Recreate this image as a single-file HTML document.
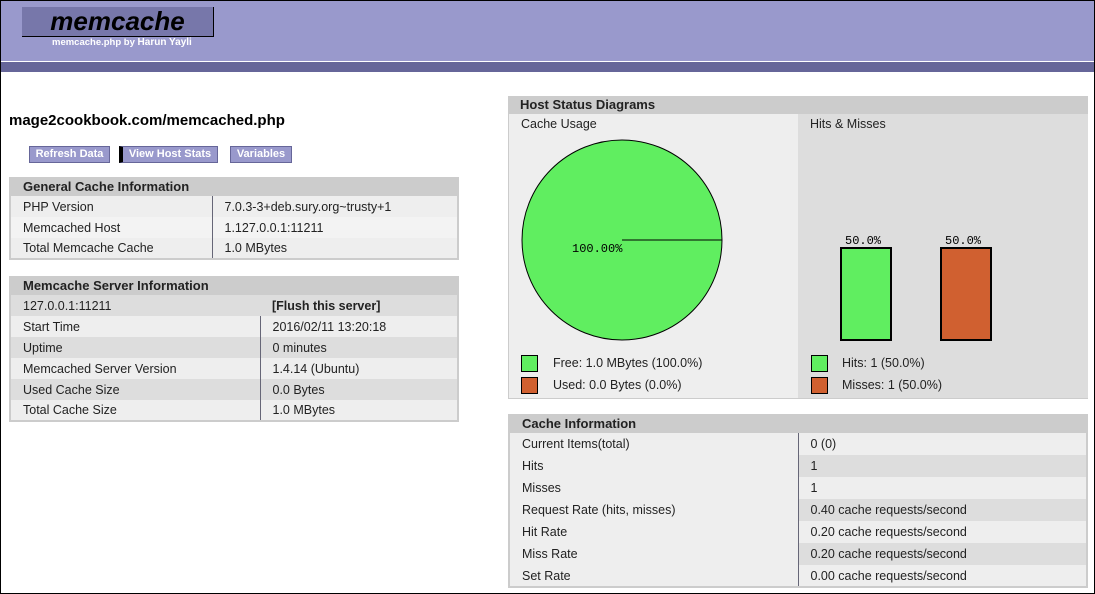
<!DOCTYPE html>
<html><head><meta charset="utf-8"><style>
*{margin:0;padding:0;box-sizing:border-box}
body{width:1095px;height:594px;position:relative;background:#fff;font-family:"Liberation Sans",Arial,sans-serif;font-size:12.5px;color:#222;overflow:hidden}
.a{position:absolute}
.frame{left:0;top:0;width:1095px;height:594px;border:1px solid #000;z-index:9;pointer-events:none}
.hd{left:0;top:0;width:1095px;height:61px;background:#9999cc}
.bar{left:0;top:62px;width:1095px;height:10px;background:#666699}
.logo{left:22px;top:7px;width:192px;height:30px;background:#7777aa;border-right:1px solid #000;border-bottom:1px solid #000;color:#000;font-style:italic;font-weight:bold;font-size:26px;text-align:center;line-height:28px}
.sub{left:52px;top:37px;color:#fff;font-weight:bold;font-size:9.5px}
.btn{top:146px;height:17px;background:#9999cc;border:1px solid #666699;color:#fff;font-weight:bold;font-size:11px;line-height:15px;text-align:center}
table{position:absolute;border-collapse:collapse;border:2px solid #ccc;border-top:none}
td{height:21px;padding:0 12px;vertical-align:middle;white-space:nowrap}
th{background:#ccc;text-align:left;padding:0 12px;height:19px;font-size:13px;font-weight:bold}
tr.o td{background:#eee}
tr.e td{background:#ddd}
td.v{border-left:1px solid #667}
</style></head><body>
<div class="a frame"></div>
<div class="a hd"></div>
<div class="a bar"></div>
<div class="a logo">memcache</div>
<div class="a sub">memcache.php by <span style="font-size:10px">Harun Yayli</span></div>
<div class="a" style="left:9px;top:112px;font-weight:bold;font-size:15px;color:#000">mage2cookbook.com/memcached.php</div>
<div class="a btn" style="left:29px;width:81px">Refresh Data</div>
<div class="a btn" style="left:119px;width:99px;border-left:4px solid #000">View Host Stats</div>
<div class="a btn" style="left:230px;width:62px">Variables</div>

<table style="left:9px;top:177px;width:450px">
<tr><th colspan="2">General Cache Information</th></tr>
<tr class="o"><td style="width:202px">PHP Version</td><td class="v">7.0.3-3+deb.sury.org~trusty+1</td></tr>
<tr class="o"><td style="background:#f3f3f3">Memcached Host</td><td class="v" style="background:#f3f3f3">1.127.0.0.1:11211</td></tr>
<tr class="o"><td>Total Memcache Cache</td><td class="v">1.0 MBytes</td></tr>
</table>

<table style="left:9px;top:276px;width:450px">
<tr><th colspan="2">Memcache Server Information</th></tr>
<tr class="e"><td style="width:250px">127.0.0.1:11211</td><td style="font-weight:bold">[Flush this server]</td></tr>
<tr class="o"><td>Start Time</td><td class="v">2016/02/11 13:20:18</td></tr>
<tr class="e"><td>Uptime</td><td class="v">0 minutes</td></tr>
<tr class="o"><td>Memcached Server Version</td><td class="v">1.4.14 (Ubuntu)</td></tr>
<tr class="e"><td>Used Cache Size</td><td class="v">0.0 Bytes</td></tr>
<tr class="o"><td>Total Cache Size</td><td class="v">1.0 MBytes</td></tr>
</table>

<div class="a" style="left:508px;top:96px;width:580px;height:303px;border:1px solid #ccc;border-top:none">
<div style="background:#ccc;height:18px;font-weight:bold;font-size:13px;padding-left:11px;line-height:18px">Host Status Diagrams</div>
<div class="a" style="left:0;top:18px;width:289px;height:284px;background:#eee"></div>
<div class="a" style="left:289px;top:18px;width:290px;height:284px;background:#ddd"></div>
<div class="a" style="left:12px;top:21px">Cache Usage</div>
<div class="a" style="left:301px;top:21px">Hits &amp; Misses</div>
<svg class="a" style="left:0;top:18px" width="579" height="284">
<ellipse cx="113" cy="126" rx="100" ry="100" fill="#60ee60" stroke="#000" stroke-width="1"/>
<line x1="113" y1="126" x2="213" y2="126" stroke="#000"/>
<text x="63" y="138" font-family="Liberation Mono,monospace" font-size="12" fill="#000">100.00%</text>
<rect x="332" y="134" width="50" height="92" fill="#60ee60" stroke="#000" stroke-width="2"/>
<rect x="432" y="134" width="50" height="92" fill="#d06030" stroke="#000" stroke-width="2"/>
<text x="336" y="130" font-family="Liberation Mono,monospace" font-size="12" fill="#000">50.0%</text>
<text x="436" y="130" font-family="Liberation Mono,monospace" font-size="12" fill="#000">50.0%</text>
<rect x="12.5" y="241.5" width="16" height="16" fill="#60ee60" stroke="#000"/>
<rect x="12.5" y="263.5" width="16" height="16" fill="#d06030" stroke="#000"/>
<rect x="302.5" y="241.5" width="16" height="16" fill="#60ee60" stroke="#000"/>
<rect x="302.5" y="263.5" width="16" height="16" fill="#d06030" stroke="#000"/>
</svg>
<div class="a" style="left:44px;top:260px">Free: 1.0 MBytes (100.0%)</div>
<div class="a" style="left:44px;top:282px">Used: 0.0 Bytes (0.0%)</div>
<div class="a" style="left:333px;top:260px">Hits: 1 (50.0%)</div>
<div class="a" style="left:333px;top:282px">Misses: 1 (50.0%)</div>
</div>

<table style="left:508px;top:414px;width:580px">
<tr><th colspan="2">Cache Information</th></tr>
<tr class="o"><td style="width:289px;height:22px">Current Items(total)</td><td class="v">0 (0)</td></tr>
<tr class="o"><td style="height:22px">Hits</td><td class="v" style="background:#ddd">1</td></tr>
<tr class="o"><td style="height:22px">Misses</td><td class="v">1</td></tr>
<tr class="o"><td style="height:22px">Request Rate (hits, misses)</td><td class="v" style="background:#ddd">0.40 cache requests/second</td></tr>
<tr class="o"><td style="height:22px">Hit Rate</td><td class="v">0.20 cache requests/second</td></tr>
<tr class="o"><td style="height:22px">Miss Rate</td><td class="v" style="background:#ddd">0.20 cache requests/second</td></tr>
<tr class="o"><td style="height:22px">Set Rate</td><td class="v">0.00 cache requests/second</td></tr>
</table>
</body></html>
